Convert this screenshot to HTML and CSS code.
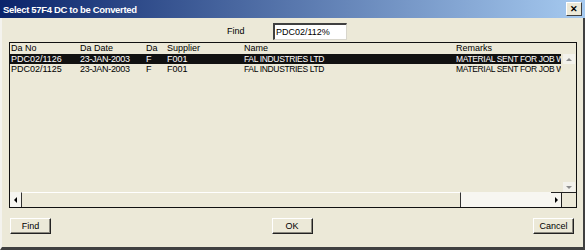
FILE: index.html
```html
<!DOCTYPE html>
<html lang="en">
<head>
    <meta charset="UTF-8">
    <title>Select 57F4 DC to be Converted</title>
    <link rel="stylesheet" href="styles.css">
</head>
<body>
    <div class="window">
        <div class="titlebar">
            <span class="title">Select 57F4 DC to be Converted</span>
            <span class="close-btn">&#x2715;</span>
        </div>
        <div class="content">
            <div class="find-row">
                <span class="find-label">Find</span>
                <div class="find-input">PDC02/112%</div>
            </div>

            <div class="listbox">
                <div class="list-head">
                    <span class="c1">Da No</span>
                    <span class="c2">Da Date</span>
                    <span class="c3">Da</span>
                    <span class="c4">Supplier</span>
                    <span class="c5">Name</span>
                    <span class="c6">Remarks</span>
                </div>
                <div class="list-main">
                    <div class="rows">
                        <div class="row selected">
                            <span class="c1">PDC02/1126</span>
                            <span class="c2">23-JAN-2003</span>
                            <span class="c3">F</span>
                            <span class="c4">F001</span>
                            <span class="c5">FAL INDUSTRIES LTD</span>
                            <span class="c6">MATERIAL SENT FOR JOB WORK</span>
                        </div>
                        <div class="row">
                            <span class="c1">PDC02/1125</span>
                            <span class="c2">23-JAN-2003</span>
                            <span class="c3">F</span>
                            <span class="c4">F001</span>
                            <span class="c5">FAL INDUSTRIES LTD</span>
                            <span class="c6">MATERIAL SENT FOR JOB WORK</span>
                        </div>
                    </div>
                    <div class="vscroll">
                        <div class="sb-btn"><i class="arrow up"></i></div>
                        <div class="vtrack"></div>
                        <div class="sb-btn"><i class="arrow down"></i></div>
                    </div>
                </div>
                <div class="hscroll">
                    <div class="hbtn"><i class="arrow left"></i></div>
                    <div class="thumb"></div>
                    <div class="htrack"></div>
                    <div class="hbtn right-btn"><i class="arrow right"></i></div>
                    <div class="corner"></div>
                </div>
            </div>

            <div class="buttons">
                <button class="btn">Find</button>
                <button class="btn">OK</button>
                <button class="btn">Cancel</button>
            </div>
        </div>
    </div>
</body>
</html>
```

FILE: styles.css
```css
html, body {
    margin: 0;
    padding: 0;
    background: #ece9d8;
}
.window {
    width: 585px;
    height: 250px;
    box-sizing: border-box;
    background-color: #ece9d8;
    border-left: 2px solid #f4f3ee;
    border-right: 2px solid #404040;
    border-bottom: 3px solid #404040;
    font-family: "Liberation Sans", Arial, sans-serif;
    font-size: 9px;
    color: #000;
}
.titlebar {
    height: 18px;
    margin-left: -2px;
    margin-right: -2px;
    background: linear-gradient(to right, #0a246a, #a6caf0);
    display: flex;
    align-items: center;
    justify-content: space-between;
    padding: 0 3px 0 3px;
}
.title {
    color: #fff;
    font-weight: bold;
    font-size: 9.5px;
    letter-spacing: -0.33px;
}
.close-btn {
    width: 14px;
    height: 12px;
    background: #ece9d8;
    border-top: 1px solid #fff;
    border-left: 1px solid #fff;
    border-right: 1px solid #404040;
    border-bottom: 1px solid #404040;
    font-size: 9px;
    font-weight: bold;
    line-height: 12px;
    text-align: center;
}
.content {
    padding: 4px 6px 0 7px;
    display: flex;
    flex-direction: column;
}
.find-row {
    display: flex;
    align-items: center;
    height: 18px;
    margin-bottom: 2px;
}
.find-label {
    margin-left: 218px;
    width: 46px;
}
.find-input {
    width: 70px;
    height: 14px;
    background: #fff;
    border-top: 2px solid #404040;
    border-left: 2px solid #404040;
    border-right: 1px solid #d8d6cc;
    border-bottom: 1px solid #d8d6cc;
    line-height: 14px;
    padding-left: 1px;
}
.listbox {
    height: 166px;
    box-sizing: border-box;
    border: 1px solid #111;
    display: flex;
    flex-direction: column;
}
.list-head, .row {
    display: flex;
    height: 10px;
    line-height: 10px;
    white-space: nowrap;
    overflow: hidden;
}
.list-head {
    height: 11px;
    line-height: 11px;
}
.c1 { width: 69px; padding-left: 1px; }
.c2 { width: 66px; }
.c3 { width: 21px; }
.c4 { width: 77px; }
.c5 { width: 212px; }
.c6 { flex: 1; overflow: hidden; }
.row .c2 { letter-spacing: -0.3px; }
.row .c5, .row .c6 {
    font-size: 8.5px;
    letter-spacing: -0.35px;
}
.list-main {
    display: flex;
    height: 138px;
}
.rows {
    width: 551px;
}
.row.selected {
    background: #111;
    color: #fff;
}
.vscroll {
    width: 15px;
    display: flex;
    flex-direction: column;
    align-items: center;
}
.sb-btn {
    width: 12px;
    height: 10px;
    background: #f3f2ec;
    display: flex;
    align-items: center;
    justify-content: center;
}
.vtrack {
    flex: 1;
}
.arrow {
    width: 0;
    height: 0;
    border: 3px solid transparent;
}
.arrow.up {
    border-bottom-color: #8c8c8c;
    border-top-width: 0;
}
.arrow.down {
    border-top-color: #8c8c8c;
    border-bottom-width: 0;
}
.arrow.left {
    border-right-color: #000;
    border-left-width: 0;
    border-top-width: 3.5px;
    border-bottom-width: 3.5px;
}
.arrow.right {
    border-left-color: #000;
    border-right-width: 0;
    border-top-width: 3.5px;
    border-bottom-width: 3.5px;
}
.hscroll {
    display: flex;
    height: 15px;
}
.hbtn {
    width: 11px;
    background: #f6f5f0;
    display: flex;
    align-items: center;
    justify-content: center;
}
.right-btn {
    width: 10px;
    border-top: 1px solid #222;
    box-sizing: border-box;
}
.thumb {
    width: 440px;
    box-sizing: border-box;
    background: #ece9d8;
    border-top: 1px solid #fff;
    border-left: 1px solid #333;
    border-right: 1px solid #333;
}
.htrack {
    width: 90px;
    background: #f7f6f1;
}
.corner {
    flex: 1;
    background: #ece9d8;
    border-top: 1px solid #222;
    border-left: 1px solid #222;
}
.buttons {
    margin-top: 10px;
    display: flex;
    justify-content: space-between;
    padding: 0 3px 0 1px;
}
.btn {
    width: 41px;
    height: 16px;
    padding: 0;
    background: #ece9d8;
    border-top: 1px solid #fff;
    border-left: 1px solid #fff;
    border-right: 1px solid #222;
    border-bottom: 1px solid #222;
    box-shadow: inset -1px -1px 0 #8a887e;
    font-family: "Liberation Sans", Arial, sans-serif;
    font-size: 9px;
    color: #000;
}
```
